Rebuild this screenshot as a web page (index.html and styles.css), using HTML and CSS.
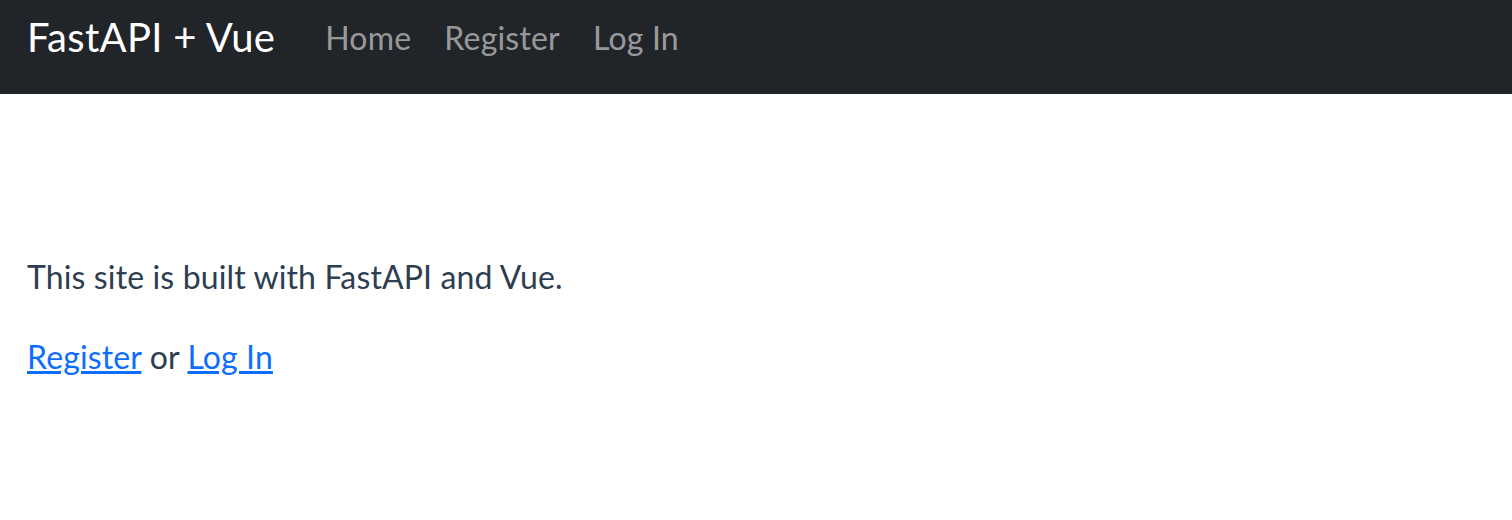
FILE: index.html
```html
<!DOCTYPE html>
<html lang="en">
<head>
<meta charset="utf-8">
<title>FastAPI + Vue</title>
<link rel="stylesheet" href="styles.css">
</head>
<body>
<nav class="navbar">
  <a class="brand" href="#">FastAPI + Vue</a>
  <ul class="nav">
    <li><a class="nav-link" href="#">Home</a></li>
    <li><a class="nav-link" href="#">Register</a></li>
    <li><a class="nav-link" href="#">Log In</a></li>
  </ul>
</nav>
<main class="main">
  <p class="lead">This site is built with FastAPI and Vue.</p>
  <p class="lead"><a class="link" href="#">Register</a> or <a class="link" href="#">Log In</a></p>
</main>
</body>
</html>
```
FILE: styles.css
```css
html, body {
  margin: 0;
  padding: 0;
  background: #fff;
}
body {
  font-family: Lato, "Noto Sans", sans-serif;
  color: #2c3e50;
}
.navbar {
  height: 94px;
  background: #212529;
  display: flex;
  align-items: center;
  padding: 0 27px;
  box-sizing: border-box;
}
.brand {
  color: #fff;
  text-decoration: none;
  font-size: 40px;
  line-height: 60px;
  letter-spacing: 0.3px;
  margin-top: -20px;
}
.nav {
  list-style: none;
  margin: -18px 0 0 50px;
  padding: 0;
  display: flex;
  gap: 33px;
}
.nav-link {
  color: rgba(255, 255, 255, 0.55);
  text-decoration: none;
  font-size: 32px;
  line-height: 48px;
  letter-spacing: 0.2px;
}
.main {
  padding: 159px 27px 0;
}
.lead {
  margin: 0 0 32px;
  font-size: 32px;
  line-height: 48px;
  letter-spacing: 0.13px;
}
.link {
  color: #0d6efd;
  text-decoration: underline;
}
```
